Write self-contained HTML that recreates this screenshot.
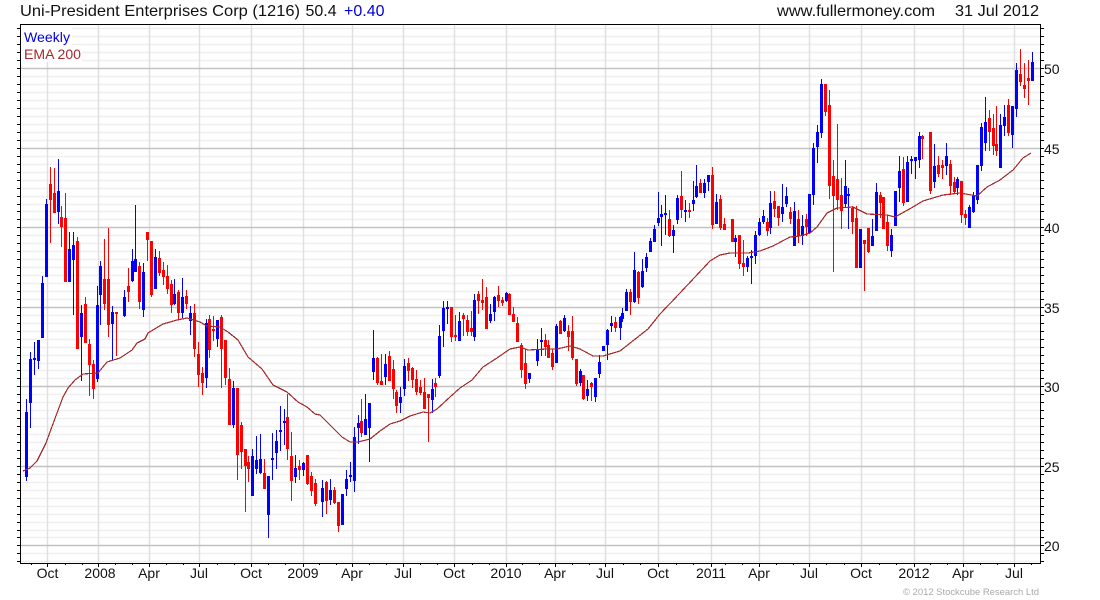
<!DOCTYPE html>
<html><head><meta charset="utf-8"><title>Uni-President Enterprises Corp (1216)</title>
<style>
html,body{margin:0;padding:0;background:#fff;width:1100px;height:600px;overflow:hidden}
svg{display:block}
text{font-family:"Liberation Sans",Arial,sans-serif}
</style></head><body>
<svg xmlns="http://www.w3.org/2000/svg" width="1100" height="600" viewBox="0 0 1100 600">
<rect width="1100" height="600" fill="#fff"/>
<g fill="none">
<path stroke="#efefef" stroke-width="1.4" d="M21 28.5H1040M21 36.5H1040M21 44.5H1040M21 52.5H1040M21 60.5H1040M21 76.5H1040M21 84.5H1040M21 92.5H1040M21 100.5H1040M21 108.5H1040M21 116.5H1040M21 124.5H1040M21 132.5H1040M21 140.5H1040M21 156.5H1040M21 164.5H1040M21 172.5H1040M21 180.5H1040M21 188.5H1040M21 196.5H1040M21 204.5H1040M21 211.5H1040M21 219.5H1040M21 235.5H1040M21 243.5H1040M21 251.5H1040M21 259.5H1040M21 267.5H1040M21 275.5H1040M21 283.5H1040M21 291.5H1040M21 299.5H1040M21 315.5H1040M21 323.5H1040M21 331.5H1040M21 339.5H1040M21 347.5H1040M21 355.5H1040M21 363.5H1040M21 370.5H1040M21 378.5H1040M21 394.5H1040M21 402.5H1040M21 410.5H1040M21 418.5H1040M21 426.5H1040M21 434.5H1040M21 442.5H1040M21 450.5H1040M21 458.5H1040M21 474.5H1040M21 482.5H1040M21 490.5H1040M21 498.5H1040M21 506.5H1040M21 514.5H1040M21 522.5H1040M21 530.5H1040M21 537.5H1040M21 553.5H1040M21 561.5H1040"/>
<path stroke="#dfdfdf" stroke-width="1.4" d="M47.5 25V563M98.5 25V563M149.5 25V563M199.5 25V563M251.5 25V563M303.5 25V563M352.5 25V563M403.5 25V563M454.5 25V563M506.5 25V563M555.5 25V563M605.5 25V563M658.5 25V563M711.5 25V563M759.5 25V563M809.5 25V563M861.5 25V563M914.5 25V563M963.5 25V563M1014.5 25V563"/>
<path stroke="#c2c2c2" stroke-width="1.4" d="M21 68.5H1040M21 148.5H1040M21 227.5H1040M21 307.5H1040M21 386.5H1040M21 466.5H1040M21 545.5H1040"/>
</g>
<g shape-rendering="crispEdges" fill="none">
<rect x="21" y="25" width="51" height="20" fill="#fff"/>
<rect x="21" y="45" width="61" height="17" fill="#fff"/>
<!-- blue wicks -->
<path stroke="#0000ff" stroke-width="1" d="M26.5 399V481M30.5 352V428M34.5 342V375M38.5 340V369M42.5 276V338M46.5 199V277M58.5 159V224M69.5 232V282M73.5 232V315M81.5 305V381M97.5 286V382M100.5 261V325M112.5 306V360M124.5 290V317M132.5 249V282M135.5 205V272M143.5 263V317M155.5 249V289M174.5 279V305M182.5 278V318M190.5 306V335M206.5 319V388M217.5 320V347M233.5 381V428M252.5 449V496M256.5 436V474M260.5 434V474M268.5 476V538M272.5 433V480M276.5 430V469M280.5 406V451M284.5 409V445M295.5 455V483M303.5 462V476M322.5 480V517M330.5 479V505M342.5 494V525M346.5 470V496M350.5 462V482M354.5 427V492M358.5 415V444M365.5 394V435M369.5 403V462M373.5 330V380M385.5 354V385M400.5 387V413M404.5 359V396M432.5 379V413M439.5 325V378M443.5 301V347M447.5 301V324M459.5 312V341M474.5 294V341M490.5 304V323M494.5 296V321M506.5 292V302M529.5 373V383M537.5 339V366M541.5 328V356M556.5 324V363M564.5 315V332M580.5 369V386M587.5 380V401M595.5 378V402M599.5 355V378M603.5 346V351M607.5 329V360M611.5 316V332M620.5 316V340M622.5 308V322M626.5 289V311M634.5 252V303M642.5 259V288M646.5 253V272M650.5 238V252M654.5 225V242M658.5 192V226M661.5 205V246M665.5 195V235M673.5 225V253M677.5 195V224M685.5 200V222M693.5 181V211M696.5 165V198M704.5 179V198M708.5 175V191M716.5 194V224M735.5 235V257M747.5 256V272M751.5 250V284M755.5 231V264M759.5 218V236M763.5 210V224M770.5 191V234M782.5 184V222M786.5 187V207M794.5 202V246M802.5 215V245M809.5 194V234M813.5 143V205M817.5 125V163M821.5 79V138M845.5 160V207M848.5 188V229M860.5 229V268M872.5 219V246M876.5 183V231M891.5 229V257M895.5 191V226M899.5 156V202M907.5 156V202M911.5 156V174M915.5 157V179M919.5 132V168M934.5 144V188M946.5 143V175M957.5 177V195M969.5 205V228M973.5 192V213M977.5 165V204M981.5 123V171M985.5 97V151M1000.5 114V168M1004.5 105V136M1012.5 106V148M1016.5 63V117M1032.5 52V81"/>
<!-- blue bodies -->
<path stroke="#0000ff" stroke-width="3" d="M26.5 412V477M30.5 359V403M34.5 358V360M38.5 340V361M42.5 283V338M46.5 204V277M58.5 191V212M69.5 249V282M73.5 245V260M81.5 313V337M97.5 305V379M100.5 266V295M112.5 312V324M124.5 297V316M132.5 261V281M135.5 259V272M143.5 272V310M155.5 257V289M174.5 294V304M182.5 297V313M190.5 313V321M206.5 323V378M217.5 320V339M233.5 388V425M252.5 456V496M256.5 460V469M260.5 459V473M268.5 476V515M272.5 458V460M276.5 441V453M280.5 430V432M284.5 421V423M295.5 468V477M303.5 463V470M322.5 488V502M330.5 490V500M342.5 494V525M346.5 479V489M350.5 475V477M354.5 437V481M358.5 423V428M365.5 419V435M369.5 403V428M373.5 358V372M385.5 364V377M400.5 397V403M404.5 366V389M432.5 389V400M439.5 336V376M443.5 308V331M447.5 307V309M459.5 321V341M474.5 300V337M490.5 314V321M494.5 297V312M506.5 293V301M529.5 373V379M537.5 349V361M541.5 340V342M556.5 326V363M564.5 318V331M580.5 371V383M587.5 389V396M595.5 378V397M599.5 362V374M603.5 346V351M607.5 330V345M611.5 323V326M620.5 317V328M622.5 313V319M626.5 292V311M634.5 270V302M642.5 271V287M646.5 257V268M650.5 241V252M654.5 229V242M658.5 218V223M661.5 214V217M665.5 213V215M673.5 230V236M677.5 198V220M685.5 210V212M693.5 200V204M696.5 186V197M704.5 183V193M708.5 175V182M716.5 202V224M735.5 238V242M747.5 258V267M751.5 256V258M755.5 235V256M759.5 222V235M763.5 216V222M770.5 203V228M782.5 207V214M786.5 196V204M794.5 211V246M802.5 226V236M809.5 194V233M813.5 148V195M817.5 132V147M821.5 84V133M845.5 186V204M848.5 194V196M860.5 229V268M872.5 236V246M876.5 192V231M891.5 235V251M895.5 191V226M899.5 171V188M907.5 162V202M911.5 159V161M915.5 157V161M919.5 136V160M934.5 166V182M946.5 156V166M957.5 179V188M969.5 207V228M973.5 196V212M977.5 165V200M981.5 127V166M985.5 122V143M1000.5 125V168M1004.5 117V126M1012.5 106V135M1016.5 70V109M1032.5 62V81"/>
<!-- red wicks -->
<path stroke="#ff0000" stroke-width="1" d="M50.5 167V243M54.5 168V213M61.5 206V247M65.5 193V282M77.5 237V349M85.5 297V343M89.5 339V396M93.5 360V399M104.5 239V310M108.5 228V337M116.5 312V356M128.5 268V302M139.5 262V309M147.5 232V261M151.5 241V297M159.5 251V276M163.5 262V285M167.5 265V294M171.5 280V313M178.5 290V319M186.5 290V309M194.5 304V357M198.5 342V387M202.5 367V395M209.5 315V358M213.5 316V341M221.5 315V388M225.5 340V385M229.5 368V425M237.5 388V480M241.5 422V469M245.5 449V512M248.5 456V482M264.5 459V489M287.5 394V460M291.5 432V501M299.5 460V480M307.5 455V485M311.5 472V496M315.5 479V506M326.5 481V514M334.5 487V504M338.5 502V532M361.5 399V437M377.5 357V385M381.5 354V385M389.5 351V381M393.5 360V399M396.5 390V413M408.5 358V381M412.5 367V388M416.5 370V395M420.5 380V395M424.5 378V409M428.5 394V442M435.5 378V397M451.5 307V342M455.5 315V341M463.5 313V336M467.5 315V336M471.5 311V336M478.5 291V314M482.5 279V310M486.5 287V329M498.5 286V307M502.5 297V306M509.5 293V315M513.5 307V322M517.5 317V342M521.5 343V378M525.5 349V389M545.5 334V356M548.5 340V358M552.5 349V370M560.5 320V334M568.5 325V351M572.5 316V360M576.5 359V386M583.5 375V400M591.5 382V401M615.5 317V332M630.5 289V315M638.5 271V304M669.5 210V237M681.5 171V218M689.5 203V218M700.5 179V193M712.5 167V229M720.5 195V230M724.5 218V230M732.5 219V242M739.5 235V269M743.5 240V276M767.5 218V236M774.5 191V217M778.5 206V226M790.5 207V224M798.5 210V243M806.5 214V236M825.5 84V116M829.5 90V199M833.5 160V272M837.5 124V210M841.5 178V229M852.5 206V234M856.5 206V268M864.5 240V291M868.5 228V253M880.5 192V218M883.5 197V229M887.5 215V251M903.5 157V206M922.5 135V159M930.5 132V194M938.5 156V177M942.5 160V179M950.5 160V195M954.5 177V194M961.5 181V223M965.5 210V225M989.5 110V151M993.5 114V155M996.5 106V156M1008.5 99V136M1020.5 49V86M1024.5 63V98M1028.5 60V105"/>
<!-- red bodies -->
<path stroke="#ff0000" stroke-width="3" d="M50.5 184V200M54.5 193V213M61.5 217V227M65.5 218V282M77.5 241V349M85.5 304V343M89.5 344V365M93.5 364V389M104.5 279V304M108.5 279V325M116.5 312V314M128.5 286V292M139.5 266V302M147.5 232V240M151.5 241V295M159.5 258V273M163.5 270V277M167.5 276V289M171.5 284V305M178.5 292V313M186.5 296V304M194.5 313V349M198.5 354V375M202.5 373V383M209.5 319V350M213.5 329V331M221.5 317V349M225.5 340V378M229.5 379V425M237.5 388V455M241.5 425V452M245.5 449V466M248.5 462V469M264.5 473V489M287.5 417V449M291.5 456V481M299.5 466V470M307.5 455V484M311.5 476V491M315.5 483V504M326.5 482V501M334.5 490V503M338.5 502V526M361.5 421V433M377.5 358V383M381.5 381V385M389.5 356V381M393.5 369V389M396.5 392V406M408.5 363V371M412.5 368V380M416.5 379V392M420.5 387V393M424.5 392V409M428.5 394V398M435.5 383V387M451.5 307V337M455.5 335V337M463.5 315V319M467.5 320V332M471.5 328V332M478.5 294V301M482.5 300V303M486.5 297V329M498.5 295V301M502.5 300V303M509.5 294V315M513.5 314V322M517.5 323V342M521.5 345V370M525.5 363V384M545.5 340V347M548.5 345V358M552.5 353V367M560.5 321V334M568.5 331V337M572.5 331V358M576.5 359V384M583.5 375V399M591.5 383V387M615.5 322V328M630.5 292V302M638.5 272V298M669.5 219V236M681.5 196V210M689.5 210V212M700.5 183V193M712.5 175V225M720.5 199V228M724.5 224V230M732.5 219V242M739.5 235V264M743.5 263V267M767.5 222V231M774.5 201V209M778.5 206V218M790.5 212V219M798.5 219V236M806.5 219V227M825.5 84V112M829.5 105V186M833.5 176V196M837.5 179V200M841.5 195V211M852.5 208V222M856.5 218V268M864.5 240V244M868.5 228V252M880.5 195V203M883.5 197V229M887.5 222V246M903.5 169V203M922.5 136V139M930.5 132V191M938.5 165V174M942.5 165V168M950.5 164V186M954.5 182V192M961.5 181V215M965.5 214V218M989.5 118V132M993.5 128V146M996.5 144V151M1008.5 105V133M1020.5 74V82M1024.5 85V89M1028.5 78V81"/>
<polyline stroke="#a52a2a" stroke-width="1.2" points="23,471 30,468 37,461 46,443 50,432 57,413 63,397 68,388 75,380 83,374 98,373 107,362 120,358 132,350 137,343 145,339 148,333 163,324 177,320 187,318 200,322 207,326 220,327 228,332 238,340 248,357 262,369 273,385 287,392 298,402 307,407 315,414 320,415 330,425 342,437 350,442 358,442 370,439 380,431 390,424 400,421 410,416 423,412 430,413 437,409 450,397 460,388 472,380 483,367 497,358 510,349 520,347 528,350 547,349 557,349 570,346 580,349 593,356 603,356 620,351 648,329 660,314 680,293 695,277 710,261 720,255 730,253 748,253 760,251 773,246 790,237 800,236 810,233 817,227 827,213 837,208 853,207 867,214 887,215 895,217 913,207 923,201 943,195 960,193 977,196 987,187 1000,180 1013,170 1023,158 1031,153"/>
<!-- axes -->
<path stroke="#000" stroke-width="1" d="M20.5 24V564M1040.5 24V564M20 24.5H1041M20 563.5H1041"/>
<path stroke="#000" stroke-width="1" d="M17 28.5H20M17 36.5H20M17 44.5H20M17 52.5H20M17 60.5H20M17 68.5H20M17 76.5H20M17 84.5H20M17 92.5H20M17 100.5H20M17 108.5H20M17 116.5H20M17 124.5H20M17 132.5H20M17 140.5H20M17 148.5H20M17 156.5H20M17 164.5H20M17 172.5H20M17 180.5H20M17 188.5H20M17 196.5H20M17 204.5H20M17 211.5H20M17 219.5H20M17 227.5H20M17 235.5H20M17 243.5H20M17 251.5H20M17 259.5H20M17 267.5H20M17 275.5H20M17 283.5H20M17 291.5H20M17 299.5H20M17 307.5H20M17 315.5H20M17 323.5H20M17 331.5H20M17 339.5H20M17 347.5H20M17 355.5H20M17 363.5H20M17 370.5H20M17 378.5H20M17 386.5H20M17 394.5H20M17 402.5H20M17 410.5H20M17 418.5H20M17 426.5H20M17 434.5H20M17 442.5H20M17 450.5H20M17 458.5H20M17 466.5H20M17 474.5H20M17 482.5H20M17 490.5H20M17 498.5H20M17 506.5H20M17 514.5H20M17 522.5H20M17 530.5H20M17 537.5H20M17 545.5H20M17 553.5H20M17 561.5H20"/>
<path stroke="#000" stroke-width="1" d="M1041 28.5H1044M1041 36.5H1044M1041 44.5H1044M1041 52.5H1044M1041 60.5H1044M1041 68.5H1044M1041 76.5H1044M1041 84.5H1044M1041 92.5H1044M1041 100.5H1044M1041 108.5H1044M1041 116.5H1044M1041 124.5H1044M1041 132.5H1044M1041 140.5H1044M1041 148.5H1044M1041 156.5H1044M1041 164.5H1044M1041 172.5H1044M1041 180.5H1044M1041 188.5H1044M1041 196.5H1044M1041 204.5H1044M1041 211.5H1044M1041 219.5H1044M1041 227.5H1044M1041 235.5H1044M1041 243.5H1044M1041 251.5H1044M1041 259.5H1044M1041 267.5H1044M1041 275.5H1044M1041 283.5H1044M1041 291.5H1044M1041 299.5H1044M1041 307.5H1044M1041 315.5H1044M1041 323.5H1044M1041 331.5H1044M1041 339.5H1044M1041 347.5H1044M1041 355.5H1044M1041 363.5H1044M1041 370.5H1044M1041 378.5H1044M1041 386.5H1044M1041 394.5H1044M1041 402.5H1044M1041 410.5H1044M1041 418.5H1044M1041 426.5H1044M1041 434.5H1044M1041 442.5H1044M1041 450.5H1044M1041 458.5H1044M1041 466.5H1044M1041 474.5H1044M1041 482.5H1044M1041 490.5H1044M1041 498.5H1044M1041 506.5H1044M1041 514.5H1044M1041 522.5H1044M1041 530.5H1044M1041 537.5H1044M1041 545.5H1044M1041 553.5H1044M1041 561.5H1044"/>
<path stroke="#000" stroke-width="1" d="M47.5 564V567M98.5 564V567M149.5 564V567M199.5 564V567M251.5 564V567M303.5 564V567M352.5 564V567M403.5 564V567M454.5 564V567M506.5 564V567M555.5 564V567M605.5 564V567M658.5 564V567M711.5 564V567M759.5 564V567M809.5 564V567M861.5 564V567M914.5 564V567M963.5 564V567M1014.5 564V567M31.5 564V565M65.5 564V565M82.5 564V565M115.5 564V565M132.5 564V565M166.5 564V565M183.5 564V565M217.5 564V565M234.5 564V565M268.5 564V565M285.5 564V565M319.5 564V565M336.5 564V565M369.5 564V565M386.5 564V565M420.5 564V565M437.5 564V565M472.5 564V565M489.5 564V565M522.5 564V565M539.5 564V565M572.5 564V565M589.5 564V565M623.5 564V565M640.5 564V565M676.5 564V565M693.5 564V565M725.5 564V565M742.5 564V565M776.5 564V565M793.5 564V565M826.5 564V565M844.5 564V565M879.5 564V565M896.5 564V565M930.5 564V565M947.5 564V565M980.5 564V565M997.5 564V565M1031.5 564V565"/>
</g>
<!-- header -->
<text x="20" y="16" font-size="16" fill="#111" textLength="280" lengthAdjust="spacingAndGlyphs">Uni-President Enterprises Corp (1216)</text>
<text x="305.5" y="16" font-size="16" fill="#111">50.4</text>
<text x="344" y="16" font-size="16" fill="#0000dd">+0.40</text>
<text x="777" y="16" font-size="16" fill="#111" textLength="158" lengthAdjust="spacingAndGlyphs">www.fullermoney.com</text>
<text x="955" y="16" font-size="16" fill="#111" textLength="84" lengthAdjust="spacingAndGlyphs">31 Jul 2012</text>
<text x="24" y="42" font-size="13.5" fill="#0000dd" textLength="46" lengthAdjust="spacingAndGlyphs">Weekly</text>
<text x="24" y="59" font-size="13.5" fill="#a52a2a" textLength="57" lengthAdjust="spacingAndGlyphs">EMA 200</text>
<!-- y labels -->
<g font-size="14" fill="#111">
<text x="1044" y="74">50</text>
<text x="1044" y="154">45</text>
<text x="1044" y="233">40</text>
<text x="1044" y="313">35</text>
<text x="1044" y="392">30</text>
<text x="1044" y="472">25</text>
<text x="1044" y="551">20</text>
</g>
<!-- x labels -->
<g font-size="14" fill="#111" text-anchor="middle">
<text x="47.5" y="578">Oct</text>
<text x="100" y="578">2008</text>
<text x="149" y="578">Apr</text>
<text x="199" y="578">Jul</text>
<text x="251" y="578">Oct</text>
<text x="303" y="578">2009</text>
<text x="352" y="578">Apr</text>
<text x="403" y="578">Jul</text>
<text x="454" y="578">Oct</text>
<text x="506" y="578">2010</text>
<text x="555" y="578">Apr</text>
<text x="605" y="578">Jul</text>
<text x="658" y="578">Oct</text>
<text x="711" y="578">2011</text>
<text x="759" y="578">Apr</text>
<text x="809" y="578">Jul</text>
<text x="861" y="578">Oct</text>
<text x="914" y="578">2012</text>
<text x="963" y="578">Apr</text>
<text x="1014" y="578">Jul</text>
</g>
<text x="903" y="595" font-size="9.5" fill="#aaaaaa" textLength="136" lengthAdjust="spacing">© 2012 Stockcube Research Ltd</text>
</svg>
</body></html>
